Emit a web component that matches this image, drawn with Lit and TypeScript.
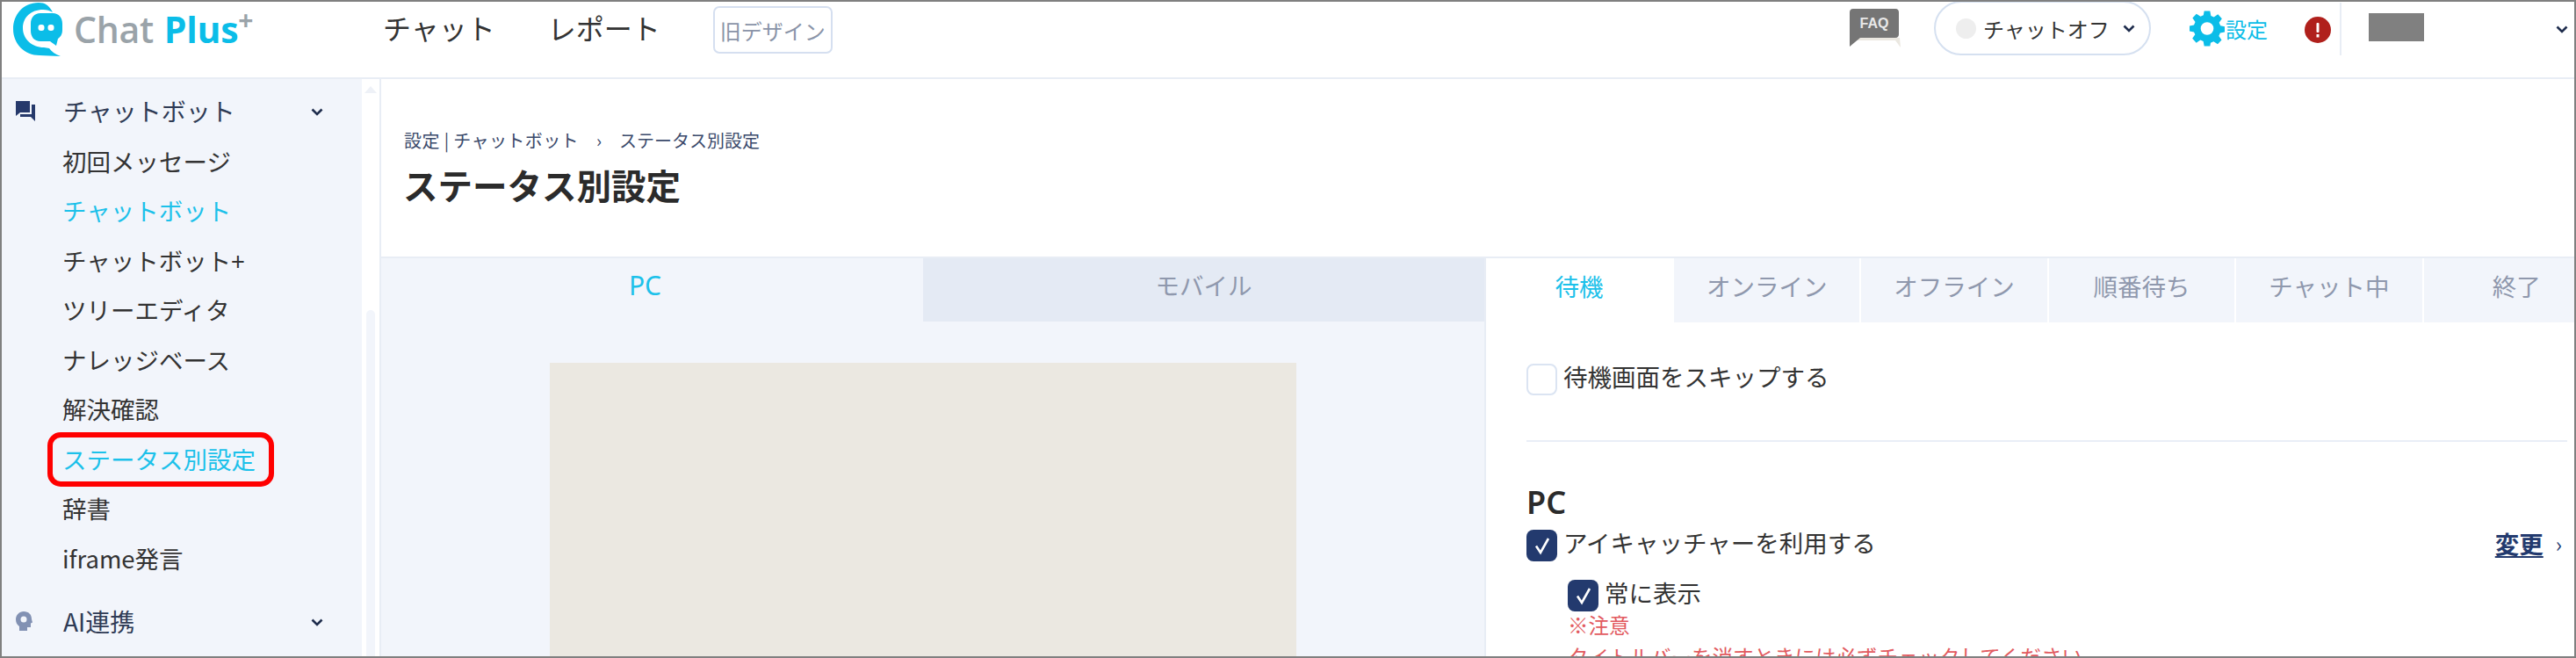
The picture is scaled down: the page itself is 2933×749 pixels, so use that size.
import { LitElement, html, css } from "lit";
import { customElement } from "lit/decorators.js";

const chev = html`<svg class="chev" width="14" height="9" viewBox="0 0 14 9"><path d="M1.5 1.5 7 7l5.5-5.5" fill="none" stroke="#1f2d4d" stroke-width="2.6"/></svg>`;
const check = html`<svg width="24" height="24" viewBox="0 0 24 24"><path d="M5 12.500 10 20 19 4" fill="none" stroke="#fff" stroke-width="2.6"/></svg>`;

@customElement("app-root")
export class AppRoot extends LitElement {
  static styles = css`
    :host {
      display: block; position: relative; box-sizing: border-box; width: 2933px; height: 749px;
      border: 2px solid #808080; overflow: hidden; background: #fff; color: #333;
      font-family: "Noto Sans CJK JP", "Noto Sans", sans-serif; font-size: 27.5px;
    }
    .hdr { height: 86px; border-bottom: 2px solid #e8edf5; display: flex; align-items: flex-start; position: relative; }
    .logo { flex: none; display: block; }
    .brand { flex: none; margin-left: 12px; height: 62px; display: flex; align-items: center; font-family: "Open Sans", sans-serif; font-weight: 600; font-size: 41px; letter-spacing: -0.3px; color: #9aa3a9; white-space: nowrap; }
    .brand b { color: #0bbde8; font-weight: 700; margin-left: 12px; }
    .brand sup { color: #9aa3a9; font-size: 30px; font-weight: 700; line-height: 0; position: relative; top: -10px; }
    .navs { margin-left: 148px; display: flex; gap: 60px; height: 58px; align-items: center; font-size: 32px; color: #333; flex: none; }
    .old { margin: 5px 0 0 60px; flex: none; box-sizing: border-box; width: 136px; height: 54px; border: 2px solid #d5dff0; border-radius: 7px; display: flex; align-items: center; justify-content: center; font-size: 24px; color: #8a94a8; white-space: nowrap; }
    .spacer { flex: 1; }
    .faq { flex: none; margin: 8px 38px 0 0; display: block; }
    .faq text { font-family: "Liberation Sans", sans-serif; }
    .pill { flex: none; box-sizing: border-box; width: 247px; height: 62px; margin-top: -1px; border: 2px solid #d5e0f0; border-radius: 31px; display: flex; align-items: center; padding-left: 23px; font-size: 24px; color: #333; white-space: nowrap; }
    .dot { width: 23px; height: 23px; border-radius: 50%; background: #eee; margin-right: 8px; flex: none; }
    .pill .chev { margin-left: 15px; }
    .gear { flex: none; margin: 10px 0 0 44px; display: block; }
    .set { flex: none; margin-left: 1px; height: 60px; display: flex; align-items: center; font-size: 24px; color: #0bbde8; white-space: nowrap; }
    .alert { flex: none; margin: 17px 0 0 42px; display: block; }
    .divider { flex: none; width: 2px; height: 60px; margin: 1px 0 0 10px; background: #e8edf5; }
    .user { flex: none; width: 63px; height: 32px; margin: 13px 0 0 31px; background: #808080; }
    .hchev { flex: none; display: flex; margin: 27px 7px 0 150px; }

    .body { display: flex; height: 657px; }
    .side { flex: none; width: 410px; background: #f2f5fb; box-sizing: border-box; padding-top: 8px; position: relative; }
    .row { height: 56.5px; display: flex; align-items: center; padding-left: 69px; white-space: nowrap; font-size: 27.5px; color: #333; position: relative; }
    .row.head { color: #2f3b55; font-size: 28px; padding-left: 70px; }
    .row.on { color: #1cc1ea; }
    .row.ai { margin-top: 15.5px; }
    .row .ic { position: absolute; left: 15px; top: 50%; transform: translateY(-50%); display: block; }
    .row .chev { position: absolute; left: 352px; top: 25px; }
    .mark { position: absolute; left: 52px; top: 402px; width: 258px; height: 62px; box-sizing: border-box; border: 6px solid #f00; border-radius: 15px; }
    .bar { flex: none; width: 20px; background: #fff; position: relative; display: flex; flex-direction: column; align-items: center; }
    .bar .up { width: 0; height: 0; border: 7px solid transparent; border-top: 0; border-bottom: 8px solid #eef1f7; margin-top: 8px; }
    .bar .thumb { position: absolute; left: 5px; right: 5px; top: 263px; bottom: 0; background: #f2f5fb; border-radius: 5px 5px 0 0; }
    .main { flex: 1; min-width: 0; border-left: 2px solid #e8edf5; display: flex; flex-direction: column; }
    .title { flex: none; height: 204px; box-sizing: border-box; padding: 54px 0 0 26px; border-bottom: 2px solid #e8edf5; }
    .crumb { font-size: 20px; color: #3b4a6b; display: flex; gap: 20px; height: 30px; align-items: center; white-space: nowrap; }
    .crumb .first { letter-spacing: 0.4px; }
    h1 { margin: 7px 0 0 -1px; font-size: 39.5px; font-weight: 700; line-height: 58px; color: #2b2b2b; white-space: nowrap; }
    .split { flex: 1; min-height: 0; display: flex; }
    .left { flex: none; width: 1256px; background: #f2f5fb; display: flex; flex-direction: column; }
    .ltabs { display: grid; grid-template-columns: 617px 639px; height: 72px; flex: none; text-align: center; }
    .ltabs div { display: flex; align-items: center; justify-content: center; padding-bottom: 12px; box-sizing: border-box; }
    .ltabs .a { color: #1cc1ea; font-family: "Noto Sans", sans-serif; font-size: 30px; padding-right: 16px; }
    .ltabs .b { background: #e4eaf4; color: #8f98ad; }
    .stage { flex: 1; padding: 47px 0 0 192px; min-height: 0; }
    .stage div { width: 850px; height: 100%; background: #ebe8e1; }
    .right { flex: 1; min-width: 0; border-left: 2px solid #e8edf5; overflow: hidden; }
    .tabs { display: flex; height: 73px; }
    .tabs div { flex: none; width: 213.4px; box-sizing: border-box; background: #f2f5fb; border-left: 2px solid #fff; color: #8f98ad; display: flex; align-items: center; justify-content: center; padding-bottom: 12px; white-space: nowrap; }
    .tabs div.on { background: #fff; color: #1cc1ea; border-left: 0; width: 212px; }
    .pane { padding: 0 8px 0 46px; }
    .cb { display: flex; align-items: center; white-space: nowrap; color: #333; }
    .cb .t { margin-top: -8px; }
    .box { flex: none; box-sizing: border-box; width: 35px; height: 36px; border-radius: 8px; margin-right: 7px; display: flex; align-items: center; justify-content: center; }
    .box.off { border: 2px solid #dbe4f2; background: #fff; }
    .box.yes { background: #233a6e; }
    .skip { margin-top: 47px; }
    hr { border: 0; height: 2px; background: #e9eef7; margin: 51px 0 0; }
    .pc { font-family: "Noto Sans", sans-serif; font-weight: 600; font-size: 36px; line-height: 48px; margin-top: 45px; color: #2b2b2b; }
    .line { display: flex; justify-content: space-between; margin-top: 7px; padding-right: 6px; }
    .chg { display: flex; align-items: center; margin-top: -6px; color: #233a6e; font-weight: 700; }
    .chg u { text-underline-offset: 3px; }
    .chg i { font-style: normal; font-weight: 400; font-size: 24px; margin-left: 14px; }
    .sub { margin: 21px 0 0 47px; }
    .warn { color: #e25a60; font-size: 23.5px; line-height: 36px; white-space: nowrap; margin: -3px 0 0 47px; }
  `;

  render() {
    const items = ["初回メッセージ", "チャットボット", "チャットボット+", "ツリーエディタ", "ナレッジベース", "解決確認", "ステータス別設定", "辞書", "iframe発言"];
    const on = new Set(["チャットボット", "ステータス別設定"]);
    return html`
      <div class="hdr">
        <svg class="logo" width="70" height="64" viewBox="0 0 70 64">
          <path fill="#0bbde8" d="M42 1C24 1 13 15 13 31c0 17 13 30 30 30 7 0 15 1 24 1-6-2-10-5-13-9l-6-1C34 52 24 42 24 30 24 18 33 9 47 9c4 0 8 1 11 3C54 4 49 1 42 1Z"/>
          <path fill="#0bbde8" d="M44 13h14c7 0 11 5 11 12v7c0 5-2 8-5 10l-2 8-7-5H44c-7 0-11-5-11-12v-8c0-7 4-12 11-12Z"/>
          <rect x="41.500" y="26" width="7" height="7" rx="3" fill="#fff"/><rect x="52.500" y="26" width="7" height="7" rx="3" fill="#fff"/>
        </svg>
        <div class="brand">Chat<b>Plus</b><sup>+</sup></div>
        <div class="navs"><span>チャット</span><span>レポート</span></div>
        <div class="old">旧デザイン</div>
        <div class="spacer"></div>
        <svg class="faq" width="58" height="44" viewBox="0 0 58 44">
          <path fill="#ebe8e1" d="M5 33h52l1 11-6-8H5Z"/>
          <path fill="#757575" d="M4 0h48c3 0 4 2 4 4v25c0 2-1 4-4 4H12l-12 10V4c0-2 1-4 4-4Z"/>
          <text x="28" y="22" text-anchor="middle" font-size="16" font-weight="700" fill="#e8e8e8">FAQ</text>
        </svg>
        <div class="pill"><span class="dot"></span>チャットオフ${chev}</div>
        <svg class="gear" width="40" height="41" viewBox="0 0 24 24">
          <path fill="#0bbde8" fill-rule="evenodd" d="M10 0h4l.6 3.3 2 .9 2.8-1.9 2.7 2.9-1.9 2.7.9 2.1L24 10.600v3.800l-3.100.6-.9 2.100 1.900 2.700-2.700 2.900-2.800-1.900-2 .9L14 24h-4l-.6-3.300-2-.9-2.800 1.900-2.700-2.900 1.900-2.700L3 14.400-.0 13.800V10.200L3 9.600l.9-2.100L2 4.800l2.700-2.900 2.800 1.900 2-.9ZM12 7.600a4.400 4.400 0 1 0 0 8.800 4.400 4.400 0 0 0 0-8.800Z"/>
        </svg>
        <div class="set">設定</div>
        <svg class="alert" width="30" height="30" viewBox="0 0 30 30">
          <circle cx="15" cy="15" r="15" fill="#b0201c"/><rect x="13.500" y="7" width="3" height="11" rx="1" fill="#fff"/><rect x="13.500" y="20" width="3" height="3.500" fill="#fff"/>
        </svg>
        <div class="divider"></div>
        <div class="user"></div>
        <div class="hchev">${chev}</div>
      </div>
      <div class="body">
        <nav class="side">
          <div class="row head">
            <svg class="ic" width="24" height="24" viewBox="0 0 24 24"><path fill="#26396b" d="M1 1h16v13H6l-5 4Z"/><path fill="#26396b" d="M19 5h4v19l-5-5H6v-3h13Z"/></svg>
            チャットボット${chev}
          </div>
          ${items.map((t) => html`<div class="row ${on.has(t) ? "on" : ""}">${t}</div>`)}
          <div class="row head ai">
            <svg class="ic" width="20" height="22" viewBox="0 0 20 22">
              <path fill="#8291b3" fill-rule="evenodd" d="M10 0c5.500 0 9 3.500 9 8.500 0 1.500 1 3 1 4l-2 1V18h-4v4H5v-5C2 15 1 12 1 9 1 4 5 0 10 0Zm0 5.500a3.500 3.500 0 1 0 0 7 3.500 3.500 0 0 0 0-7Z"/>
            </svg>
            AI連携${chev}
          </div>
          <div class="mark"></div>
        </nav>
        <div class="bar"><div class="up"></div><div class="thumb"></div></div>
        <main class="main">
          <div class="title">
            <div class="crumb"><span class="first">設定 | チャットボット</span><span>›</span><span>ステータス別設定</span></div>
            <h1>ステータス別設定</h1>
          </div>
          <div class="split">
            <section class="left">
              <div class="ltabs"><div class="a">PC</div><div class="b">モバイル</div></div>
              <div class="stage"><div></div></div>
            </section>
            <section class="right">
              <div class="tabs">
                <div class="on">待機</div><div>オンライン</div><div>オフライン</div><div>順番待ち</div><div>チャット中</div><div>終了</div>
              </div>
              <div class="pane">
                <label class="cb skip"><span class="box off"></span><span class="t">待機画面をスキップする</span></label>
                <hr />
                <div class="pc">PC</div>
                <div class="line">
                  <label class="cb"><span class="box yes">${check}</span><span class="t">アイキャッチャーを利用する</span></label>
                  <a class="chg"><u>変更</u><i>›</i></a>
                </div>
                <label class="cb sub"><span class="box yes">${check}</span><span class="t">常に表示</span></label>
                <div class="warn">※注意<br />タイトルバーを消すときには必ずチェックしてください</div>
              </div>
            </section>
          </div>
        </main>
      </div>
    `;
  }
}
